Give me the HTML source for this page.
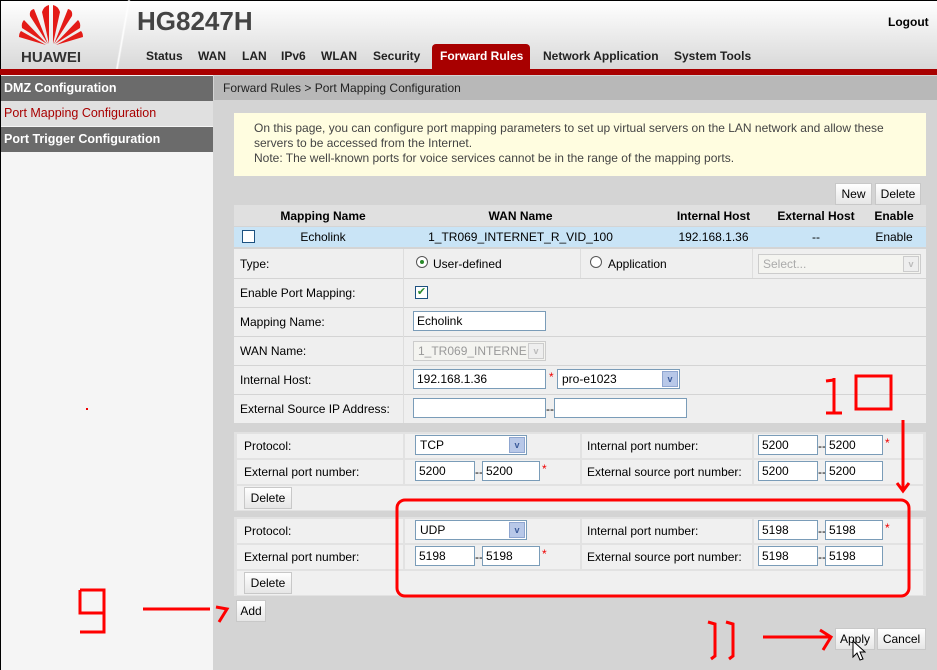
<!DOCTYPE html>
<html><head><meta charset="utf-8"><style>
*{box-sizing:border-box;margin:0;padding:0}
body{width:937px;height:670px;overflow:hidden;position:relative;font-family:"Liberation Sans",Arial,sans-serif;font-size:12px;color:#000;background:#d4d4d4}
.a{position:absolute}
.hdr{left:0;top:0;width:937px;height:69px;background:linear-gradient(#fff,#d8d8d8);border-top:1px solid #000;border-left:1px solid #000}
.nav{top:49px;font-weight:bold;font-size:12px;color:#222}
.side{left:0;top:75px;width:213px;height:595px;background:#f5f5f5;border-left:1px solid #000}
.si{left:1px;width:212px;height:25px;line-height:25px;padding-left:3px;font-weight:bold;font-size:12.5px;color:#fff;background:#6b6b6b}
.in{position:absolute;background:#fff;border:1px solid #7a9cb8;height:20px;line-height:18px;padding-left:3px;font-size:12px}
.btn{position:absolute;background:linear-gradient(#fff,#e6e6e6);border:1px solid #c8c8c8;height:22px;line-height:20px;text-align:center;font-size:12px}
.row{position:absolute;left:234px;width:692px;background:#efefef}
.lab{position:absolute;font-size:12px}
.sel{position:absolute;background:#fff;border:1px solid #7a9cb8;height:20px;line-height:18px;padding-left:4px}
.sel i{position:absolute;right:1px;top:1px;width:16px;height:16px;background:#b8c8e8;border:1px solid #8fa6d0;font-style:normal;font-size:9px;line-height:14px;text-align:center;color:#3a5a9a;font-weight:bold}
.star{position:absolute;color:#e00;font-size:12px}
</style></head><body>
<div class="a hdr"></div>
<svg class="a" style="left:18px;top:4px" width="66" height="42" viewBox="0 0 66 42">
<g fill="#e41b17">
<path d="M31 40 L24 8 Q26 2 31 1 Z"/><path d="M35 40 L42 8 Q40 2 35 1 Z"/>
<path d="M30 40 L12 12 Q11 6 16 5 Z"/><path d="M36 40 L54 12 Q55 6 50 5 Z"/>
<path d="M29 40 L4 24 Q3 19 6 16 Z"/><path d="M37 40 L62 24 Q63 19 60 16 Z"/>
<path d="M28 41 L1 33 Q1 29 3 27 Z"/><path d="M38 41 L65 33 Q65 29 63 27 Z"/>
</g></svg>
<div class="a" style="left:21px;top:49px;font-weight:bold;font-size:15px;color:#333">HUAWEI</div>
<div class="a" style="left:113px;top:0;width:20px;height:69px;background:linear-gradient(100deg,transparent 45%,#fff 50%,transparent 55%)"></div>
<div class="a" style="left:137px;top:6px;font-weight:bold;font-size:26px;color:#444">HG8247H</div>
<div class="a" style="left:888px;top:15px;font-weight:bold;font-size:12px">Logout</div>
<div class="a nav" style="left:146px">Status</div>
<div class="a nav" style="left:198px">WAN</div>
<div class="a nav" style="left:242px">LAN</div>
<div class="a nav" style="left:281px">IPv6</div>
<div class="a nav" style="left:321px">WLAN</div>
<div class="a nav" style="left:373px">Security</div>
<div class="a" style="left:432px;top:44px;width:98px;height:26px;background:#a80000;border-radius:4px 4px 0 0"></div>
<div class="a nav" style="left:440px;color:#fff">Forward Rules</div>
<div class="a nav" style="left:543px">Network Application</div>
<div class="a nav" style="left:674px">System Tools</div>
<div class="a" style="left:0;top:69px;width:937px;height:6px;background:#a80000"></div>
<div class="a side"></div>
<div class="a si" style="top:76px">DMZ Configuration</div>
<div class="a" style="left:1px;top:101px;width:212px;height:25px;line-height:25px;padding-left:3px;font-size:12.5px;color:#a80000;background:#e0e0e0">Port Mapping Configuration</div>
<div class="a si" style="top:127px">Port Trigger Configuration</div>
<div class="a" style="left:86px;top:408px;width:2px;height:2px;background:#e00"></div>
<div class="a" style="left:214px;top:76px;width:723px;height:24px;line-height:24px;padding-left:9px;background:#b8b8b8;font-size:12px;color:#222">Forward Rules &gt; Port Mapping Configuration</div>
<div class="a" style="left:234px;top:113px;width:692px;height:63px;background:#fffde0;padding:8px 0 0 20px;font-size:12px;color:#444;line-height:15px">On this page, you can configure port mapping parameters to set up virtual servers on the LAN network and allow these servers to be accessed from the Internet.<br>Note: The well-known ports for voice services cannot be in the range of the mapping ports.</div>
<div class="btn" style="left:835px;top:183px;width:37px">New</div>
<div class="btn" style="left:875px;top:183px;width:46px">Delete</div>
<div class="a" style="left:234px;top:205px;width:692px;height:21px;background:#e0e0e0"></div>
<div class="a" style="left:234px;top:227px;width:692px;height:20px;background:#c9e4f6"></div>
<div class="a" style="left:234px;top:205px;width:692px;font-weight:bold;font-size:12px">
<span class="a" style="left:28px;width:122px;top:4px;text-align:center">Mapping Name</span>
<span class="a" style="left:150px;width:273px;top:4px;text-align:center">WAN Name</span>
<span class="a" style="left:423px;width:113px;top:4px;text-align:center">Internal Host</span>
<span class="a" style="left:536px;width:92px;top:4px;text-align:center">External Host</span>
<span class="a" style="left:628px;width:64px;top:4px;text-align:center">Enable</span>
<span class="a" style="left:28px;width:122px;top:25px;text-align:center;font-weight:normal">Echolink</span>
<span class="a" style="left:150px;width:273px;top:25px;text-align:center;font-weight:normal">1_TR069_INTERNET_R_VID_100</span>
<span class="a" style="left:423px;width:113px;top:25px;text-align:center;font-weight:normal">192.168.1.36</span>
<span class="a" style="left:536px;width:92px;top:25px;text-align:center;font-weight:normal">--</span>
<span class="a" style="left:628px;width:64px;top:25px;text-align:center;font-weight:normal">Enable</span>
<span class="a" style="left:8px;top:25px;width:13px;height:13px;border:1px solid #1c5180;background:#fff"></span>
</div>
<div class="row" style="top:249px;height:29px"></div>
<div class="row" style="top:279px;height:28px"></div>
<div class="row" style="top:308px;height:28px"></div>
<div class="row" style="top:337px;height:28px"></div>
<div class="row" style="top:366px;height:28px"></div>
<div class="row" style="top:395px;height:28px"></div>
<div class="a" style="left:403px;top:249px;width:1px;height:174px;background:#ddd"></div>
<div class="a" style="left:580px;top:249px;width:1px;height:29px;background:#ddd"></div>
<div class="a" style="left:752px;top:249px;width:1px;height:29px;background:#ddd"></div>
<div class="lab" style="left:240px;top:257px">Type:</div>
<div class="lab" style="left:240px;top:286px">Enable Port Mapping:</div>
<div class="lab" style="left:240px;top:315px">Mapping Name:</div>
<div class="lab" style="left:240px;top:344px">WAN Name:</div>
<div class="lab" style="left:240px;top:373px">Internal Host:</div>
<div class="lab" style="left:240px;top:402px">External Source IP Address:</div>
<div class="a" style="left:416px;top:256px;width:12px;height:12px;border:1px solid #555;border-radius:50%;background:#fff"><div class="a" style="left:3px;top:3px;width:4px;height:4px;border-radius:50%;background:#2a8a2a"></div></div>
<div class="lab" style="left:433px;top:257px">User-defined</div>
<div class="a" style="left:590px;top:256px;width:12px;height:12px;border:1px solid #555;border-radius:50%;background:#fff"></div>
<div class="lab" style="left:608px;top:257px">Application</div>
<div class="sel" style="left:758px;top:254px;width:163px;color:#aaa;border-color:#ccc;background:#f4f4f0">Select...<i style="background:#eee;border-color:#ccc;color:#bbb">v</i></div>
<div class="a" style="left:415px;top:286px;width:13px;height:13px;border:1px solid #1c5180;background:#fff;color:#2a8a2a;font-size:11px;line-height:11px;text-align:center">✔</div>
<div class="in" style="left:413px;top:311px;width:133px">Echolink</div>
<div class="sel" style="left:413px;top:341px;width:133px;color:#999;border-color:#ccc;background:#f4f4f0;overflow:hidden">1_TR069_INTERNE<i style="background:#eee;border-color:#ccc;color:#bbb">v</i></div>
<div class="in" style="left:413px;top:369px;width:133px">192.168.1.36</div>
<div class="star" style="left:549px;top:370px">*</div>
<div class="sel" style="left:557px;top:369px;width:123px">pro-e1023<i>v</i></div>
<div class="in" style="left:413px;top:398px;width:133px"></div>
<div class="lab" style="left:546px;top:402px">--</div>
<div class="in" style="left:554px;top:398px;width:133px"></div>
<div class="a" style="left:234px;top:432px;width:692px;height:79px;background:#e2e2e2"></div>
<div class="a" style="left:234px;top:517px;width:692px;height:79px;background:#e2e2e2"></div>
<div id="blocks"></div>
<div class="btn" style="left:236px;top:600px;width:30px">Add</div>
<div class="btn" style="left:835px;top:628px;width:40px">Apply</div>
<div class="btn" style="left:877px;top:628px;width:49px">Cancel</div>
<script>
var h='';[[432,'TCP','5200'],[517,'UDP','5198']].forEach(function(b){var t=b[0],v=b[2];
h+='<div class="a" style="left:237px;top:'+(t+2)+'px;width:686px;height:24px;background:#f0f0f0"></div>';
h+='<div class="a" style="left:237px;top:'+(t+28)+'px;width:686px;height:24px;background:#f0f0f0"></div>';
h+='<div class="a" style="left:237px;top:'+(t+54)+'px;width:686px;height:24px;background:#f0f0f0"></div>';
[403,580,752].forEach(function(x){h+='<div class="a" style="left:'+x+'px;top:'+(t+2)+'px;width:2px;height:50px;background:#e2e2e2"></div>'});
h+='<div class="lab" style="left:244px;top:'+(t+7)+'px">Protocol:</div>';
h+='<div class="lab" style="left:244px;top:'+(t+33)+'px">External port number:</div>';
h+='<div class="lab" style="left:587px;top:'+(t+7)+'px">Internal port number:</div>';
h+='<div class="lab" style="left:587px;top:'+(t+33)+'px">External source port number:</div>';
h+='<div class="sel" style="left:415px;top:'+(t+3)+'px;width:112px">'+b[1]+'<i>v</i></div>';
[[415,t+29,true],[758,t+3,true],[758,t+29,false]].forEach(function(p){
h+='<div class="in" style="left:'+p[0]+'px;top:'+p[1]+'px;width:60px">'+v+'</div>';
h+='<div class="lab" style="left:'+(p[0]+60)+'px;top:'+(p[1]+4)+'px">--</div>';
h+='<div class="in" style="left:'+(p[0]+67)+'px;top:'+p[1]+'px;width:58px">'+v+'</div>';
if(p[2])h+='<div class="star" style="left:'+(p[0]+127)+'px;top:'+(p[1]+1)+'px">*</div>';});
h+='<div class="btn" style="left:244px;top:'+(t+55)+'px;width:48px">Delete</div>';});
document.getElementById('blocks').innerHTML=h;
</script>
<svg class="a" style="left:0;top:0" width="937" height="670" fill="none" stroke="#f00" stroke-width="3">
<path d="M834 378 V413 M834 380 L826 381 M826 413 H842"/>
<path d="M856 376 H891 V409 H856 Z"/>
<path d="M903 420 V490 M897 483 L903 491 L909 483"/>
<rect x="397" y="500" width="512" height="96" rx="8"/>
<path d="M80 590 H104 V632 H80 M80 590 V613 H104"/>
<path d="M143 609 H210 M216 607 L227 609 L219 622"/>
<path d="M708 622 L715 624 V656 L711 659 M726 622 L733 624 V656 L729 659"/>
<path d="M763 637 H830 M820 630 L831 637 L823 650"/>
</svg>
<svg class="a" style="left:852px;top:640px" width="14" height="22"><path d="M1 1 V17 L5 13 L8 20 L11 19 L8 12 L13 12 Z" fill="#fff" stroke="#000"/></svg>
</body></html>
